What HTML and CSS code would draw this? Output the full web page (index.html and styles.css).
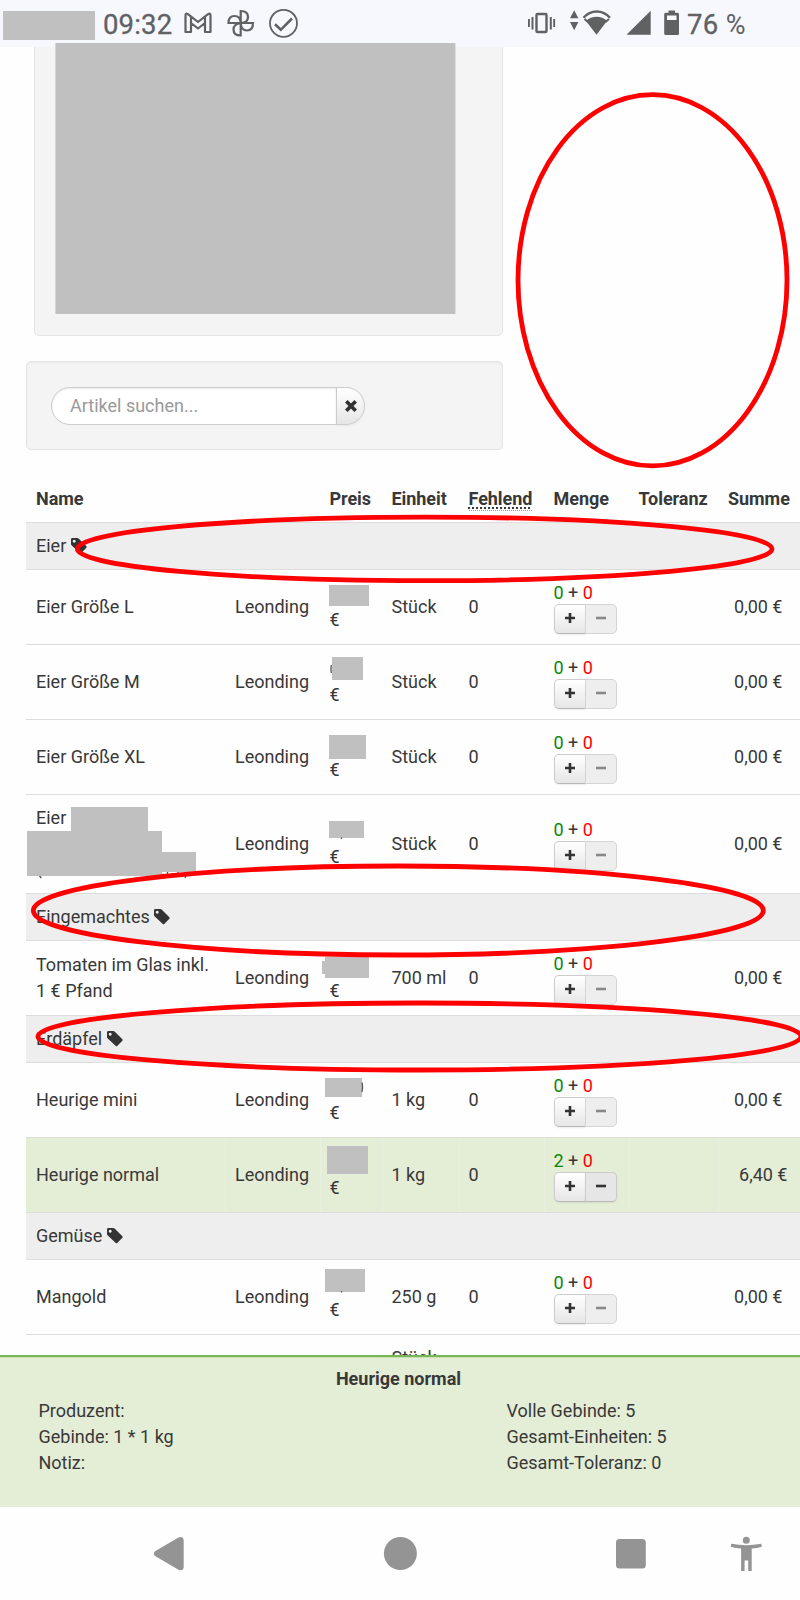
FILE: index.html
```html
<!DOCTYPE html>
<html lang="de">
<head>
<meta charset="utf-8">
<title>Bestellung</title>
<link rel="stylesheet" href="styles.css">
</head>
<body>
<svg class="defs" width="0" height="0">
  <symbol id="tag" viewBox="0 0 16 16"><path fill-rule="evenodd" d="M1.4 0H6.2Q7 0 7.6.5L15.4 8.3Q16 9 15.4 9.7L10.2 14.9Q9.5 15.4 8.8 14.9L.5 7.2Q0 6.700 0 6V1.400Q0 0 1.400 0ZM3.200 1.700a1.500 1.500 0 1 0 .01 0Z"/></symbol>
  <symbol id="plus" viewBox="0 0 10 10"><path d="M5 0V10M0 5H10" stroke-width="2.600"/></symbol>
  <symbol id="minus" viewBox="0 0 10 10"><path d="M0 5H10" stroke-width="2.600"/></symbol>
</svg>

<header class="status">
  <span class="mask mask-carrier"></span>
  <span class="clock">09:32</span>
  <svg class="status-icons" width="120" height="47" viewBox="180 0 120 47" fill="none" stroke="#5f6163" stroke-width="2.200">
    <path stroke-linejoin="round" d="M185.500 15.500Q185.500 12.700 188 14.200L198 22L208 14.200Q210.500 12.700 210.500 15.500V32H205V23L198 28.500L191 23V32H185.500ZM191 17V23M205 17V23"/>
    <path d="M240.700 23V11Q248 11 248 17Q248 23 240.700 23ZM240.700 23H253Q253 30.500 247 30.500Q241 30.500 240.700 23ZM240.700 23V35.500Q233.500 35.500 233.500 29.500Q233.500 24 240.700 23ZM240.700 23H228.500Q228.500 16 234.500 16Q240.500 16 240.700 23Z"/>
    <circle cx="283.500" cy="23.300" r="13.500" stroke-width="1.800"/>
    <path d="M275 24.300L280.800 29.800L292 18.500" stroke-width="2.600"/>
  </svg>
  <svg class="status-icons status-right" width="160" height="47" viewBox="525 0 160 47" fill="#5f6163">
    <rect x="536.500" y="14" width="10" height="18" rx="1" fill="none" stroke="#5f6163" stroke-width="2.400"/>
    <path d="M528 19h1.900v8H528ZM531.500 17h2v12.500h-2ZM549.800 17h2v12.500h-2ZM553.200 19h1.900v8h-1.900Z"/>
    <path d="M570 18.300L574.200 10.200L578.400 18.300ZM570 22H578.400L574.200 30.200Z"/>
    <path d="M596.500 34.800L586 21Q590.500 16.800 596.500 16.800T607 21Z"/>
    <path d="M583.500 17.800Q589 11.500 596.700 11.500T610 17.800" fill="none" stroke="#5f6163" stroke-width="2.300"/>
    <path d="M584.500 19L588 22M609 19L605.500 22" stroke="#5f6163" stroke-width="2"/>
    <path d="M626.500 34.800L650.700 10.800V34.800Z"/>
    <path fill-rule="evenodd" d="M668.500 10.500h6.500v2.200h2.500q1.500 0 1.500 1.500V33.500q0 1.500-1.500 1.500H665.700q-1.500 0-1.500-1.500V14.200q0-1.500 1.500-1.500h2.800ZM667 15.500V20H676.500V15.500Z"/>
  </svg>
  <span class="battery">76 <span class="pct">%</span></span>
</header>

<main class="page">
  <section class="well well-top"><span class="mask mask-top"></span></section>
  <section class="well well-search">
    <div class="search">
      <div class="search-input">Artikel suchen...</div>
      <div class="search-clear"><svg width="12" height="12" viewBox="0 0 12 12"><path d="M1.300 1.300L10.700 10.700M10.700 1.300L1.300 10.700" stroke="#333" stroke-width="3.700"/></svg></div>
    </div>
  </section>

  <section class="table">
    <div class="row head"><b>Name</b><b></b><b>Preis</b><b>Einheit</b><b><span class="abbr">Fehlend</span></b><b>Menge</b><b>Toleranz</b><b>Summe</b></div>
    <div class="group"><span>Eier</span><svg class="tag"><use href="#tag"/></svg></div>

    <div class="row"><div>Eier Größe L</div><div>Leonding</div><div class="price"><i class="mask p1"></i>€</div><div>Stück</div><div>0</div>
      <div class="qty"><p><em>0</em> + <strong>0</strong></p><div class="btns"><span class="btn"><svg><use href="#plus"/></svg></span><span class="btn off"><svg><use href="#minus"/></svg></span></div></div><div></div><div class="sum">0,00 €</div></div>

    <div class="row"><div>Eier Größe M</div><div>Leonding</div><div class="price"><i class="mask p2"></i>€</div><div>Stück</div><div>0</div>
      <div class="qty"><p><em>0</em> + <strong>0</strong></p><div class="btns"><span class="btn"><svg><use href="#plus"/></svg></span><span class="btn off"><svg><use href="#minus"/></svg></span></div></div><div></div><div class="sum">0,00 €</div></div>

    <div class="row"><div>Eier Größe XL</div><div>Leonding</div><div class="price"><i class="mask p3"></i>€</div><div>Stück</div><div>0</div>
      <div class="qty"><p><em>0</em> + <strong>0</strong></p><div class="btns"><span class="btn"><svg><use href="#plus"/></svg></span><span class="btn off"><svg><use href="#minus"/></svg></span></div></div><div></div><div class="sum">0,00 €</div></div>

    <div class="row tall"><div class="three">Eier<i class="mask n1"></i><i class="mask n2"></i><i class="mask n3"></i></div><div>Leonding</div><div class="price"><i class="mask p4"></i>€</div><div>Stück</div><div>0</div>
      <div class="qty"><p><em>0</em> + <strong>0</strong></p><div class="btns"><span class="btn"><svg><use href="#plus"/></svg></span><span class="btn off"><svg><use href="#minus"/></svg></span></div></div><div></div><div class="sum">0,00 €</div></div>

    <div class="group"><span>Eingemachtes</span><svg class="tag"><use href="#tag"/></svg></div>

    <div class="row"><div>Tomaten im Glas inkl.<br>1 € Pfand</div><div>Leonding</div><div class="price"><i class="mask p5"></i><i class="mask p5b"></i>€</div><div>700 ml</div><div>0</div>
      <div class="qty"><p><em>0</em> + <strong>0</strong></p><div class="btns"><span class="btn"><svg><use href="#plus"/></svg></span><span class="btn off"><svg><use href="#minus"/></svg></span></div></div><div></div><div class="sum">0,00 €</div></div>

    <div class="group"><span>Erdäpfel</span><svg class="tag"><use href="#tag"/></svg></div>

    <div class="row"><div>Heurige mini</div><div>Leonding</div><div class="price"><i class="mask p6"></i>€</div><div>1 kg</div><div>0</div>
      <div class="qty"><p><em>0</em> + <strong>0</strong></p><div class="btns"><span class="btn"><svg><use href="#plus"/></svg></span><span class="btn off"><svg><use href="#minus"/></svg></span></div></div><div></div><div class="sum">0,00 €</div></div>

    <div class="row chosen"><div>Heurige normal</div><div>Leonding</div><div class="price"><i class="mask p7"></i>€</div><div>1 kg</div><div>0</div>
      <div class="qty"><p><em>2</em> + <strong>0</strong></p><div class="btns"><span class="btn"><svg><use href="#plus"/></svg></span><span class="btn held"><svg><use href="#minus"/></svg></span></div></div><div></div><div class="sum">6,40 €</div></div>

    <div class="group"><span>Gemüse</span><svg class="tag"><use href="#tag"/></svg></div>

    <div class="row"><div>Mangold</div><div>Leonding</div><div class="price"><i class="mask p8"></i>€</div><div>250 g</div><div>0</div>
      <div class="qty"><p><em>0</em> + <strong>0</strong></p><div class="btns"><span class="btn"><svg><use href="#plus"/></svg></span><span class="btn off"><svg><use href="#minus"/></svg></span></div></div><div></div><div class="sum">0,00 €</div></div>

    <div class="row"><div></div><div></div><div></div><div class="two">Stück</div><div></div><div></div><div></div><div></div></div>
  </section>
</main>

<footer class="details">
  <h1>Heurige normal</h1>
  <div class="cols">
    <div>Produzent:<br>Gebinde: 1 * 1 kg<br>Notiz:</div>
    <div>Volle Gebinde: 5<br>Gesamt-Einheiten: 5<br>Gesamt-Toleranz: 0</div>
  </div>
</footer>

<nav class="nav">
  <svg width="800" height="93" viewBox="0 1507 800 93" fill="#949494">
    <path d="M155 1551.200L178.500 1537.400Q183.700 1535.800 183.700 1541V1566.500Q183.700 1571.700 178.500 1569.800L155 1556Q152.700 1553.600 155 1551.200Z"/>
    <circle cx="400.400" cy="1553.500" r="16.500"/>
    <rect x="616" y="1539" width="29.800" height="29.500" rx="3.500"/>
    <circle cx="746.300" cy="1540.200" r="3.500"/>
    <path d="M731.300 1543.800Q746.300 1546.600 761.300 1543.800L761.800 1546.800Q757 1548.200 751.700 1548.600V1571H748.200V1560.500H744.600V1571H741.100V1548.600Q735.600 1548.200 730.800 1546.800Z"/>
  </svg>
</nav>

<svg class="marks" width="800" height="1600" viewBox="0 0 800 1600" fill="none">
  <g stroke="#555" stroke-width="1.300">
    <path d="M39.500 876L41.300 878M331.300 665Q330.700 669 331.300 673M362 1082.500Q363 1087 362 1092M342 837.500L341 839M341.500 1291V1292.500"/>
    <path d="M162.500 874.500H164M167.500 872V875M172 874H174.500M178 872V875M187.500 873L185 878"/>
  </g>
  <g stroke="#f00" stroke-width="4.800">
    <ellipse cx="652.500" cy="280.300" rx="134.500" ry="185.600"/>
    <ellipse cx="424.700" cy="548.900" rx="347.300" ry="31.800"/>
    <ellipse cx="398.300" cy="910.500" rx="365" ry="44.500"/>
    <ellipse cx="419.500" cy="1036.500" rx="381.500" ry="33.500"/>
  </g>
</svg>
</body>
</html>
```

FILE: styles.css
```css
* { box-sizing: border-box; }
body {
  margin: 0;
  width: 800px;
  height: 1600px;
  position: relative;
  overflow: hidden;
  display: flex;
  flex-direction: column;
  background: #fefefe;
  color: #383838;
  font: 18px/26px Roboto, sans-serif;
}
.defs { position: absolute; }
.mask { background: #c0c0c0; display: block; }
i.mask { position: absolute; z-index: 2; }

.status {
  height: 47px;
  flex: none;
  display: flex;
  align-items: center;
  background: #f7f8fe;
  color: #5f6163;
  font-size: 27.500px;
}
.mask-carrier { width: 92px; height: 29px; margin: 3px 0 0 3px; }
.clock { width: 77px; margin-left: 8px; -webkit-text-stroke: .3px #5f6163; padding-top: 2px; letter-spacing: .15px; }
.status-icons { flex: none; }
.status-right { margin-left: 225px; }
.battery { margin-left: 2px; padding-top: 2px; -webkit-text-stroke: .3px #5f6163; white-space: nowrap; letter-spacing: .3px; }
.pct { font-size: 27px; -webkit-text-stroke: 0; }

.page { height: 1308px; flex: none; }
.well {
  background: #f4f4f4;
  border: 1px solid #e5e5e5;
  border-radius: 5px;
  box-shadow: inset 0 1px 2px rgba(0, 0, 0, .05);
}
.well-top {
  width: 469px;
  height: 289px;
  margin: 0 0 25px 34px;
  padding-left: 20px;
  border-top: 0;
  border-radius: 0 0 5px 5px;
  box-shadow: none;
}
.mask-top { height: 271px; width: 400px; margin-top: -4px; transform: translateX(.4px); }
.well-top { display: flex; align-items: flex-start; }
.well-search { width: 477px; height: 89px; margin-left: 26px; padding: 25px 24px; }
.search { display: flex; height: 38px; }
.search-input {
  width: 286px;
  padding: 5px 0 0 18px;
  background: #fff;
  border: 1px solid #ccc;
  border-radius: 19px 0 0 19px;
  box-shadow: inset 0 1px 2px rgba(0, 0, 0, .08);
  color: #999;
}
.search-clear {
  width: 29px;
  margin-left: -1px;
  display: flex;
  align-items: center;
  justify-content: center;
  border: 1px solid #ccc;
  border-radius: 0 19px 19px 0;
  background: linear-gradient(#fff, #e6e6e6);
  box-shadow: 0 1px 2px rgba(0, 0, 0, .06);
}

.table { margin: 36px 0 0 26px; width: 774px; }
.row {
  position: relative;
  display: grid;
  grid-template-columns: 199px 94.500px 62px 77px 85px 85px 89.500px 82px;
  height: 75px;
  border-top: 1px solid #ddd;
  align-items: center;
}
.row > * { padding-left: 10px; white-space: nowrap; }
.row.head { height: 36px; border: 0; align-items: start; }
.head b { font-weight: 700; letter-spacing: -.05px; }
.abbr {
  display: inline-block;
  height: 25px;
  border-bottom: 1px dotted #999;
  text-decoration: underline dotted 1.500px;
  text-underline-offset: 2px;
}
.row.tall { height: 99px; }
.three { height: 78px; }
.two { height: 54px; }
.price { padding-top: 26px; }
.group {
  height: 47px;
  display: flex;
  align-items: center;
  gap: 4.500px;
  padding-left: 10px;
  border-top: 1px solid #ddd;
  background: #eee;
}
.tag { width: 16px; height: 16px; fill: #333; }
.row.chosen { background: #e4edd6; }
.chosen > * + * { align-self: stretch; display: flex; flex-direction: column; justify-content: center; border-left: 1px solid #eaf0e0; padding-left: 9px; }
.row > .sum { text-align: right; padding-right: 17.500px; }
.chosen > .sum { padding-right: 12.500px; }

.qty p { margin: 0; line-height: 24px; transform: translateY(1px); }
.qty em { font-style: normal; color: #0a870a; }
.qty strong { font-weight: 400; color: #f00; }
.btns { display: flex; height: 29.500px; }
.btn {
  width: 32px;
  display: flex;
  align-items: center;
  justify-content: center;
  padding-bottom: 2px;
  border: 1px solid #ccc;
  border-bottom-color: #b8b8b8;
  border-radius: 5px 0 0 5px;
  background: linear-gradient(#fff, #e6e6e6);
  box-shadow: 0 1px 2px rgba(0, 0, 0, .07);
}
.btn svg { width: 10px; height: 10px; stroke: #333; }
.btn + .btn { width: 32.500px; margin-left: -1px; border-radius: 0 5px 5px 0; }
.btn.off { background: #eee; border-color: #d4d4d4; box-shadow: none; }
.btn.off svg { stroke: #888; }
.btn.held { background: #e6e6e6; }

.p1 { left: 302.500px; top: 15px; width: 40px; height: 21px; }
.p2 { left: 305.500px; top: 11.500px; width: 31px; height: 23px; }
.p3 { left: 302.500px; top: 14.500px; width: 37px; height: 24px; }
.p4 { left: 302.500px; top: 25.500px; width: 35px; height: 17px; }
.p5 { left: 298.500px; top: 16px; width: 44px; height: 21px; }
.p5b { left: 295.500px; top: 20px; width: 4px; height: 13px; }
.p6 { left: 298.500px; top: 14.500px; width: 37px; height: 19px; }
.p7 { left: 300.500px; top: 8px; width: 41px; height: 28px; }
.p8 { left: 298.500px; top: 9px; width: 40px; height: 23px; }
.n1 { left: 44.500px; top: 11.500px; width: 77px; height: 26px; }
.n2 { left: .5px; top: 36px; width: 135px; height: 45px; }
.n3 { left: 135px; top: 57px; width: 35px; height: 20px; }

.details {
  position: relative;
  height: 152px;
  flex: none;
  border-top: 2px solid #77b755;
  background: #e4edd6;
  box-shadow: inset 0 1px #c9dfb6;
  padding: 9px 0 0;
}
.details h1 { margin: 0; padding-right: 3px; text-align: center; font-size: 18px; line-height: 26px; }
.cols { display: grid; grid-template-columns: 468px 1fr; padding: 6px 0 0 38.500px; }
.nav { position: relative; height: 93px; flex: none; }
.nav svg { display: block; }
.marks { position: absolute; left: 0; top: 0; z-index: 5; }
```
